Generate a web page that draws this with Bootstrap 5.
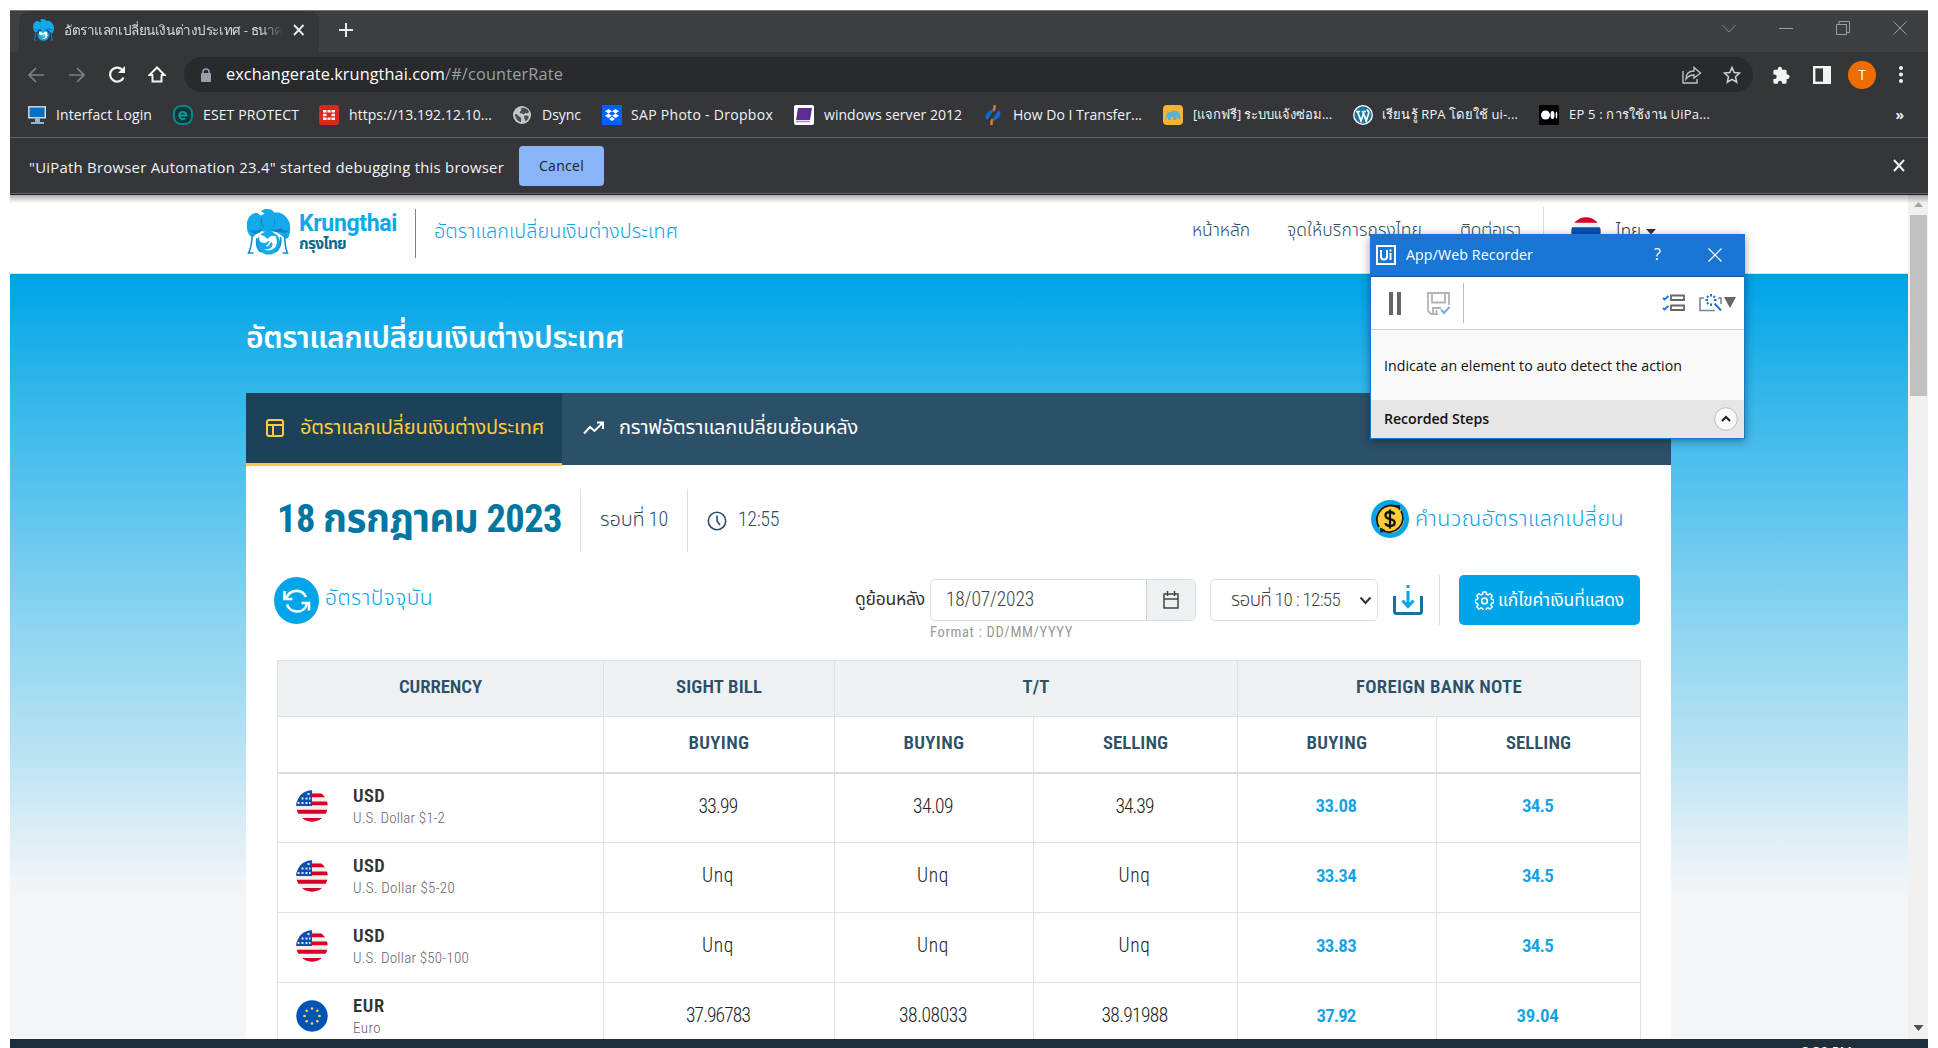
<!DOCTYPE html>
<html lang="th">
<head>
<meta charset="utf-8">
<meta name="viewport" content="width=device-width, initial-scale=1">
<title>อัตราแลกเปลี่ยนเงินต่างประเทศ - ธนาคารกรุงไทย</title>
<link rel="stylesheet" href="https://cdn.jsdelivr.net/npm/bootstrap@5.3.0/dist/css/bootstrap.min.css">
<style>
body{background:#fff;overflow:hidden;height:1048px;width:1938px;font-family:"Roboto Condensed",Roboto,"Noto Sans Thai","Noto Sans",sans-serif;font-stretch:75%;color:#333}
svg{display:block;flex:none}
.t{white-space:pre;display:inline-block;flex:none;line-height:1.2}
.ui{font-family:"Open Sans","Noto Sans",sans-serif;font-stretch:100%}
.screen{margin:10px 0 0 10px;width:1918px;height:1038px;position:relative}
.tabstrip{height:42px;background:#3c4043;border-top:1px solid #777;padding-left:9px}
.btab{width:300px;height:41px;background:#35363a;border-radius:10px 10px 0 0;padding:0 0 3px 14px;color:#d5d8dc;font-size:13.5px}
.btab-title{width:219px;margin-left:10px;overflow:hidden;-webkit-mask-image:linear-gradient(90deg,#000 90%,transparent);mask-image:linear-gradient(90deg,#000 90%,transparent)}
.dark{background:#35363a;color:#f1f3f4}
.tools{height:45px;padding-left:17px}
.omni{width:1569px;height:35px;border-radius:18px;background:#292a2d;margin-left:18px;padding:0 12px 0 17px}
.marks{height:40px;padding:0 24px 4px 18px;font-size:14px}
.infobar{height:56px;border-top:1px solid #63646a;padding:0 23px 0 19px;font-size:14.9px}
.infoline{height:2px;background:#202124;border-top:1px solid #63646a}
.cancel{width:85px;height:40px;background:#8ab4f8;color:#202124;border-radius:4px;margin-left:15px}
.viewport{height:844px;overflow:hidden;position:relative}
.viewport::before{content:"";position:absolute;z-index:3;left:0;right:0;top:0;height:8px;background:linear-gradient(rgba(0,0,0,.32),rgba(0,0,0,0))}
.scroll{width:20px;background:#f1f1f1}
.thumb{width:17px;height:181px;background:#c1c1c1;margin-left:2px}
.site{width:1898px}
.head{height:79px;background:#fff;border-bottom:1px solid #d9e2e8;padding-left:236px}
.hero{height:770px;background:linear-gradient(#009ddf 0,#00a4e8 6px,#03a6e9 14px,#2fb5ea 110px,#59c3ed 220px,#8dd4f1 350px,#bde4f3 490px,#d8ecf5 545px,#f4f6f8 623px);padding-left:236px}
.hero-title{height:119px;color:#fff;font-size:30px;font-weight:600;padding-top:8px}
.tabs{width:1425px;height:72px;background:#2c5067;color:#fff;font-size:20px}
.tabs .t{margin-bottom:2px}
.tab-on{width:316px;height:73px;background:#1c4158;color:#ffcd3c;border-bottom:3px solid #ffcd3c;padding-left:20px}
.sheet{width:1425px;height:600px;background:#fff;padding:24px 31px 0 31px}
.blue{color:#12a2e6;font-weight:300}
.navy{color:#2c5067;font-weight:300}
.vline{width:1px;background:#d7e1e9;flex:none}
.daterow{height:63px}
.daterow .t,.daterow svg{margin-bottom:3px}
.ctl{height:50px;margin-top:23px}
.field{height:42px;border:1px solid #d7e1e9;border-radius:5px;background:#fff;font-size:19.5px;color:#444;font-weight:300}
.addon{width:49px;background:#edf1f4;border-left:1px solid #ced4da;border-radius:0 5px 5px 0}
.edit{width:181px;height:50px;background:#00a4e8;border-radius:5px;color:#fff;font-size:17.5px;margin-left:19px}
.rates{width:1363px;table-layout:fixed;margin:35px 0 0 0;border:1px solid #d7e1e9;color:#333}
.rates th,.rates td{border:1px solid #dae2ea;vertical-align:middle;text-align:center;padding:0;background:#fff}
.rates thead th{height:56px;font-size:18.8px;font-weight:600;color:#2c5067;padding-bottom:3px}
.rates thead tr:first-child th{background:#edf1f4;height:56px}
.rates thead tr:last-child th{border-bottom:2px solid #d7e1e9}
.rates tbody td{height:70px;font-size:19.5px;color:#222;padding:0 2px 3px 0;font-weight:300}
.rates tbody td.fx{color:#12a2e6;font-weight:600;font-size:19px}
.code{font-size:18.5px;font-weight:600;line-height:23px;color:#333;margin-top:2px}
.desc{font-size:15px;line-height:21px;color:#666}
.taskbar{height:9px;background:#1e2f3b;overflow:hidden}
.clock{font-size:13.5px;line-height:12px;color:#fff;padding:6px 76px 0 0}
.rec{position:absolute;left:1360px;top:224px;width:375px;height:205px;border:1px solid #1a76d4;background:#f9f9f9;box-shadow:0 2px 9px rgba(0,0,0,.4);z-index:5;color:#111;font-size:14.2px}
.rec-title{height:42px;background:#1a76d4;color:#fff;border-bottom:1px solid #0f5ba8;padding:0 0 2px 5px}
.rec-tools{height:53px;background:#fff;border-bottom:1px solid #d0d0d0;padding-left:18px}
.rec-body{height:70px;padding:2px 0 0 13px}
.rec-steps{height:38px;background:#e6e6e6;padding:0 6px 0 13px;font-weight:600}
</style>
<script src="https://cdn.jsdelivr.net/npm/bootstrap@5.3.0/dist/js/bootstrap.bundle.min.js"></script>
</head>
<body>
<svg width="0" height="0" class="position-absolute">
<defs>
<clipPath id="round"><circle cx="16" cy="16" r="15.7"/></clipPath>
<symbol id="us" viewBox="0 0 32 32"><g clip-path="url(#round)"><rect width="32" height="32" fill="#f0f0f0"/><path d="M0 3.500h32v3.800H0zM0 11.500h32v3.800H0zM0 19.800h32v4H0zM0 28h32v4H0z" fill="#d80027"/><rect width="16" height="16" fill="#0f4fb0"/><path d="M5.500 7.500h2v2h-2zM9.500 7.500h2v2h-2zM13 7.500h1.500v2H13zM11.500 3h2v2h-2zM5.500 12h2v2h-2zM1.500 12h2v2h-2zM9.500 12h2v2h-2zM13 12h1.500v2H13z" fill="#dfe8fb"/></g></symbol>
<symbol id="eu" viewBox="0 0 32 32"><circle cx="16" cy="16" r="15.700" fill="#0052b4"/><g fill="#ffda44"><circle cx="16" cy="8.500" r="1.300"/><circle cx="21.300" cy="10.700" r="1.300"/><circle cx="23.500" cy="16" r="1.300"/><circle cx="21.300" cy="21.300" r="1.300"/><circle cx="16" cy="23.500" r="1.300"/><circle cx="10.700" cy="21.300" r="1.300"/><circle cx="8.500" cy="16" r="1.300"/><circle cx="10.700" cy="10.700" r="1.300"/></g></symbol>
<symbol id="bird" viewBox="0 0 44 46"><path d="M14.500 2.500C16 .6 18 0 20.500 0 24 0 26.500 1 27.500 3.500L32 3.500c5 1 9 5 11 10 1.500 5 1 11-1.500 15.500-2 1-3.500.5-4.500-1L29 22l-7 1.500L14 22l-7 5.500c-2 .5-4-.5-5-3C-.5 19-.5 12 3 7.500 5 5 8 3.500 11 4l3 2.500 4-1.500c-1-1.500-2-2-3.500-2.500z" fill="#14a9ea"/><path d="M3 21c2 4 7 4.500 11 2l2-3c-4 1-9 2-13 1zM24 20c3 3 7 4 10 3 3 1 6 1 8-1-3 0-6-1-8-3-3 2-6 2-10 1zM16 8c-1 4-1 8 2 11-3-1-6-6-2-11zM27 7c2 4 1 9-2 12 4-2 5-8 2-12z" fill="#0684c8"/><circle cx="22" cy="34" r="11.500" fill="#14a9ea"/><path d="M13 26c4 0 6 2 8 4 2-3 5-4 8-3 2 4 2 9-1 12-3 3-8 3-11 1 4 1 8 0 9-4 0-3-2-4-4-4-2 2-5 3-8 1-1-2-2-4-1-7z" fill="#fff"/><path d="M24 32c-1 2-1 4-4 5" fill="none" stroke="#fff" stroke-width="1.600"/><path d="M6 26c-1 7-1 13-4 18h5M38 27c1 6 0 11 3 17h-5M10.500 29c-1 6 0 11 4 14M34 28c1 6-1 12-5 15" fill="none" stroke="#1191cf" stroke-width="1.600"/></symbol>
</defs></svg>

<div class="screen">
  <div class="tabstrip d-flex align-items-start ui">
    <div class="btab d-flex align-items-center">
      <svg width="21" height="24" viewBox="0 0 44 46"><use href="#bird" width="44" height="46"/></svg>
      <div class="btab-title"><span class="t" data-w="219">อัตราแลกเปลี่ยนเงินต่างประเทศ - ธนาค</span></div>
      <svg width="12" height="12" viewBox="0 0 12 12" style="margin-left:10px"><path d="M1 1l9.500 10M10.500 1L1 11" stroke="#e8eaed" stroke-width="1.900"/></svg>
    </div>
    <svg width="16" height="16" viewBox="0 0 16 16" style="margin:11px 0 0 19px"><path d="M8 1v14M1 8h14" stroke="#e8eaed" stroke-width="2"/></svg>
    <div class="ms-auto d-flex align-items-center" style="height:34px;padding-right:21px;gap:43px">
      <svg width="14" height="9" viewBox="0 0 14 9"><path d="M.5 1L7 8l6.500-7" fill="none" stroke="#83878a"/></svg>
      <svg width="14" height="9" viewBox="0 0 14 9"><path d="M0 4.500h14" stroke="#9a9ea1"/></svg>
      <svg width="14" height="14" viewBox="0 0 14 14"><path d="M.5 3.500h10v10H.5zM3 3.500V.5h10.500v11H11" fill="none" stroke="#9a9ea1"/></svg>
      <svg width="14" height="14" viewBox="0 0 14 14"><path d="M.5.5l13 13M13.500.5l-13 13" stroke="#9a9ea1"/></svg>
    </div>
  </div>
  <div class="tools dark d-flex align-items-center ui">
    <svg width="18" height="16" viewBox="0 0 18 16"><path d="M17 8H2M9 1L2 8l7 7" fill="none" stroke="#7d8084" stroke-width="1.700"/></svg>
    <svg width="18" height="16" viewBox="0 0 18 16" style="margin-left:23px"><path d="M1 8h15M9 1l7 7-7 7" fill="none" stroke="#7d8084" stroke-width="1.700"/></svg>
    <svg width="18" height="17" viewBox="0 0 18 17" style="margin-left:22px"><path d="M15.500 11.500a7 7 0 1 1-1.500-8" fill="none" stroke="#f1f3f4" stroke-width="2.200"/><path d="M17 0v7h-7z" fill="#f1f3f4"/></svg>
    <svg width="18" height="17" viewBox="0 0 18 17" style="margin-left:22px"><path d="M4.500 9v6.500h9V9h3L9 1.500 1.500 9z" fill="none" stroke="#f1f3f4" stroke-width="2"/><path d="M5.500 8h7v2h-7z" fill="#35363a"/></svg>
    <div class="omni d-flex align-items-center">
      <svg width="10" height="14" viewBox="0 0 10 14"><path d="M2 6V4a3 3 0 0 1 6 0v2" fill="none" stroke="#9aa0a6" stroke-width="1.500"/><rect y="5" width="10" height="9" rx="1" fill="#9aa0a6"/></svg>
      <span class="t text-white" style="font-size:16.300px;margin-left:15px" data-w="219">exchangerate.krungthai.com</span><span class="t" style="font-size:16.300px;color:#9aa0a6" data-w="118">/#/counterRate</span>
      <svg width="20" height="18" viewBox="0 0 20 18" class="ms-auto"><path d="M1 5v12h14v-4" fill="none" stroke="#bdc1c6" stroke-width="1.400"/><path d="M4 13c0-6 4-8 8-8V1.500L18.500 7 12 12V9c-4 0-6 1-8 4z" fill="none" stroke="#bdc1c6" stroke-width="1.400"/></svg>
      <svg width="18" height="18" viewBox="0 0 18 18" style="margin-left:21px"><path d="M9 1.500l2.200 5.100 5.300.5-4 3.600 1.200 5.500L9 13.300l-4.700 2.900 1.200-5.500-4-3.600 5.300-.5z" fill="none" stroke="#d0d3d6" stroke-width="1.500"/></svg>
    </div>
    <svg width="19" height="18" viewBox="0 0 20 20" style="margin-left:19px"><path d="M17 9.500h-1.300V6A1.700 1.700 0 0 0 14 4.300h-3.500V3a2.300 2.300 0 1 0-4.600 0v1.300H2.500A1.700 1.700 0 0 0 1 6v3.500h1.200a2.500 2.500 0 0 1 0 5H1V18c0 1 .7 1.700 1.500 1.700H6v-1.300a2.400 2.400 0 0 1 4.700 0v1.300H14c1 0 1.700-.7 1.700-1.700v-3.600H17a2.500 2.500 0 0 0 0-4.900z" fill="#f1f3f4"/></svg>
    <svg width="18" height="18" viewBox="0 0 18 18" style="margin-left:22px"><rect x="1.200" y="1.200" width="15.600" height="15.600" fill="none" stroke="#f1f3f4" stroke-width="2.400"/><path d="M10 1h7v16h-7z" fill="#f1f3f4"/></svg>
    <div class="rounded-circle text-white d-flex align-items-center justify-content-center" style="width:28px;height:28px;background:#ef6c00;margin-left:17px;font-size:14px">T</div>
    <svg width="4" height="17" viewBox="0 0 4 17" style="margin-left:23px" fill="#f1f3f4"><circle cx="2" cy="2" r="2"/><circle cx="2" cy="8.500" r="2"/><circle cx="2" cy="15" r="2"/></svg>
  </div>
  <div class="marks dark d-flex align-items-center ui">
    <svg width="19" height="20" viewBox="0 0 19 20"><rect x=".8" y="1.800" width="16.500" height="11" fill="#0a6fc2" stroke="#cfe3f3" stroke-width="1.400"/><path d="M7 13h5v4H7zM3 17h13v2H3z" fill="#8fb4d4"/></svg>
    <span class="t" style="margin-left:9px" data-w="96">Interfact Login</span>
    <svg width="20" height="20" viewBox="0 0 20 20" style="margin-left:21px"><rect x="1" y="1" width="18" height="18" rx="7" fill="#0b3a3e" stroke="#0f8387" stroke-width="2"/><path d="M6.500 10.500h7a3.600 3.600 0 1 0-1.300 2.800" fill="none" stroke="#12979b" stroke-width="2"/></svg>
    <span class="t" style="margin-left:10px" data-w="96">ESET PROTECT</span>
    <svg width="20" height="20" viewBox="0 0 20 20" style="margin-left:20px"><rect width="20" height="20" rx="3" fill="#da291c"/><path d="M4 5h3.500v2.500H4zM8.500 5h3v2.500h-3zM12.500 5H16v2.500h-3.500zM4 8.700h3.500v2.600H4zM12.500 8.700H16v2.600h-3.500zM4 12.500h3.500V15H4zM8.500 12.500h3V15h-3zM12.500 12.500H16V15h-3.500z" fill="#fff"/></svg>
    <span class="t" style="margin-left:10px" data-w="143">https://13.192.12.10...</span>
    <svg width="18" height="18" viewBox="0 0 18 18" style="margin-left:21px"><circle cx="9" cy="9" r="9" fill="#c4c7c9"/><path d="M2 8c3 0 3 2 5 3s1 3 1 5c-3 0-6-4-6-8zM8 2c4-1 7 1 8 4-1 1-2 2-3 1s-1 2-3 1-4 0-3-2 2-2 1-4zM11 10c3-1 4 0 5 1-1 2-2 4-4 4z" fill="#4a4c50"/></svg>
    <span class="t" style="margin-left:11px" data-w="39">Dsync</span>
    <svg width="20" height="20" viewBox="0 0 20 20" style="margin-left:21px"><path fill="#0061fe" d="M0 0h20v20H0z"/><path d="M6.500 4l3.500 2.200-3.500 2.200L3 6.200zM13.500 4L17 6.200l-3.500 2.200L10 6.200zM6.500 8.500l3.500 2.200-3.500 2.200L3 10.700zM13.500 8.500l3.500 2.200-3.500 2.200-3.500-2.200zM10 12l3 2-3 2-3-2z" fill="#fff"/></svg>
    <span class="t" style="margin-left:9px" data-w="142">SAP Photo - Dropbox</span>
    <svg width="20" height="20" viewBox="0 0 20 20" style="margin-left:21px"><rect width="20" height="20" rx="2" fill="#fff"/><path d="M4 3h14l-2 12H2z" fill="#5c2d91"/><path d="M2 16.500h14" stroke="#a58bc4" stroke-width="1.500"/></svg>
    <span class="t" style="margin-left:10px" data-w="138">windows server 2012</span>
    <svg width="16" height="20" viewBox="0 0 16 20" style="margin-left:23px"><path d="M9.500 0v3.500L8 6M6.500 20v-3.500L8 14" stroke="#e87a1d" stroke-width="2.500" fill="none"/><path d="M8.500 4C3 6-.5 9 1 14.500c2 0 3-1 3.500-3 .5-2 3.500-3 4-7.500zM7.500 16c5.500-2 9-5 7.500-10.500-2 0-3 1-3.500 3-.5 2-3.500 3-4 7.500z" fill="#0b6cd0"/></svg>
    <span class="t" style="margin-left:12px" data-w="129">How Do I Transfer...</span>
    <svg width="20" height="20" viewBox="0 0 20 20" style="margin-left:21px"><rect width="20" height="20" rx="4" fill="#f9b233"/><path d="M3 13c0-5 2-6 5-6 1-2 6-2 8 1 1 2 2 4 1 6h-2l-1-3-1 4h-3v-3H8v3H5v-4l-1 3z" fill="#5fb0cf"/></svg>
    <span class="t" style="margin-left:10px;font-size:13px" data-w="139">[แจกฟรี] ระบบแจ้งซ่อม...</span>
    <svg width="20" height="20" viewBox="0 0 20 20" style="margin-left:21px"><circle cx="10" cy="10" r="9.300" fill="#21759b" stroke="#fff" stroke-width="1.300"/><path d="M3 6.500h4M4.500 6.500L8 16l2.500-7.500M8.500 6.500h4.500M10 6.500L13.200 16l2.600-8c.3-2-1.500-2-1.800-3.500" fill="none" stroke="#fff" stroke-width="1.700"/></svg>
    <span class="t" style="margin-left:9px;font-size:13px" data-w="136">เรียนรู้ RPA โดยใช้ ui-...</span>
    <svg width="20" height="20" viewBox="0 0 20 20" style="margin-left:21px"><rect width="20" height="20" rx="1.500"/><circle cx="6.500" cy="10" r="4.500" fill="#fff"/><ellipse cx="13.500" cy="10" rx="2" ry="4" fill="#fff"/><ellipse cx="17.500" cy="10" rx=".8" ry="3.500" fill="#fff"/></svg>
    <span class="t" style="margin-left:10px;font-size:13px" data-w="141">EP 5 : การใช้งาน UiPa...</span>
    <span class="t ms-auto fw-bold">»</span>
  </div>
  <div class="infobar dark d-flex align-items-center ui">
    <span class="t mt-1" data-w="475">"UiPath Browser Automation 23.4" started debugging this browser</span>
    <div class="cancel d-flex align-items-center justify-content-center"><span class="t" style="font-size:14px;margin-top:1px" data-w="45">Cancel</span></div>
    <svg width="12" height="13" viewBox="0 0 12 13" class="ms-auto"><path d="M1 1l10 11M11 1L1 12" stroke="#f1f3f4" stroke-width="2"/></svg>
  </div>
  <div class="infoline"></div>

  <div class="viewport d-flex">
    <div class="site">
      <header class="head d-flex align-items-start">
        <svg width="45" height="46" viewBox="0 0 44 46" style="margin-top:14px"><use href="#bird" width="44" height="46"/></svg>
        <div class="d-flex flex-column" style="margin:15px 0 0 8px">
          <span class="t fw-bold" style="font-family:Roboto,sans-serif;font-size:23px;font-stretch:100%;line-height:27px;color:#09a9ea" data-w="98">Krungthai</span>
          <span class="t fw-bold" style="font-size:15.500px;line-height:17px;margin-top:-1px;color:#0a6a8c" data-w="47">กรุงไทย</span>
        </div>
        <div style="width:1px;height:49px;background:#12a2e6;margin:14px 0 0 18px"></div>
        <span class="t blue" style="font-size:19.800px;margin:25px 0 0 18px" data-w="244">อัตราแลกเปลี่ยนเงินต่างประเทศ</span>
        <nav class="d-flex navy" style="font-size:17.500px;margin:25px 0 0 514px">
          <span class="t" data-w="58">หน้าหลัก</span>
          <span class="t" style="margin-left:37px" data-w="135">จุดให้บริการกรุงไทย</span>
          <span class="t" style="margin-left:38px" data-w="61">ติดต่อเรา</span>
        </nav>
        <div class="vline" style="height:58px;margin:12px 0 0 22px"></div>
        <svg width="30" height="30" viewBox="0 0 32 32" style="margin:22px 0 0 27px"><g clip-path="url(#round)"><path fill="#f0f0f0" d="M0 0h32v32H0z"/><path fill="#d80027" d="M0 0h32v6H0zM0 26h32v6H0z"/><path fill="#0052b4" d="M0 11h32v10H0z"/></g></svg>
        <span class="t" style="font-size:17px;font-weight:300;margin:26px 0 0 15px" data-w="25">ไทย</span>
        <svg width="10" height="6" viewBox="0 0 10 6" style="margin:34px 0 0 5px"><path d="M0 0h10L5 5.500z" fill="#333"/></svg>
      </header>
      <div class="hero">
        <div class="hero-title d-flex align-items-center"><span class="t" data-w="378">อัตราแลกเปลี่ยนเงินต่างประเทศ</span></div>
        <div class="tabs d-flex align-items-start">
          <div class="tab-on d-flex align-items-center">
            <svg width="18" height="18" viewBox="0 0 18 18"><rect x="1" y="1" width="16" height="16" rx="2" fill="none" stroke="#ffcd3c" stroke-width="2"/><path d="M1 6h16M7 6v11" stroke="#ffcd3c" stroke-width="2"/></svg>
            <span class="t" style="margin-left:16px" data-w="244">อัตราแลกเปลี่ยนเงินต่างประเทศ</span>
          </div>
          <div class="d-flex align-items-center" style="height:70px;padding-left:21px">
            <svg width="21" height="14" viewBox="0 0 21 14"><path d="M1 12.500l6-6.500 4.500 4L19.500 2M14 1.500h6V8" fill="none" stroke="#fff" stroke-width="2"/></svg>
            <span class="t" style="margin-left:15px" data-w="239">กราฟอัตราแลกเปลี่ยนย้อนหลัง</span>
          </div>
        </div>
        <main class="sheet">
          <div class="daterow d-flex align-items-center">
            <span class="t fw-bold" style="font-size:38.500px;color:#0076a0;line-height:60px" data-w="285">18 กรกฎาคม 2023</span>
            <div class="vline h-100" style="margin-left:18px"></div>
            <span class="t navy" style="font-size:20px;margin-left:19px" data-w="68">รอบที่ 10</span>
            <div class="vline h-100" style="margin-left:19px"></div>
            <svg width="20" height="20" viewBox="0 0 20 20" style="margin:0 0 0 19px"><circle cx="10" cy="10" r="8.700" fill="none" stroke="#2c5067" stroke-width="1.600"/><path d="M10 4.500V10l3 4" fill="none" stroke="#2c5067" stroke-width="1.600"/></svg>
            <span class="t navy" style="font-size:20px;margin-left:11px" data-w="41">12:55</span>
            <svg width="38" height="38" viewBox="0 0 38 38" class="ms-auto"><circle cx="19" cy="19" r="19" fill="#00a4e8"/><circle cx="19" cy="19" r="14" fill="#ffcd3c"/><path d="M8 27A14 14 0 0 1 27 7.500M30 11a14 14 0 0 1-18.500 19.500" fill="none" stroke="#1a1a1a" stroke-width="1.800"/><path d="M23.500 5h5.500v5.500zM9 27.500l.5 5.500 5-3z" fill="#1a1a1a"/><path d="M23.500 14.500c-1-1.800-2.600-2.500-4.500-2.500-2.500 0-4.500 1.200-4.500 3.500 0 5 9.200 2.200 9.200 7 0 2.300-2.200 3.500-4.700 3.500-2.200 0-4-1-4.800-2.800M19 9.500v19" fill="none" stroke="#111" stroke-width="2.300"/></svg>
            <span class="t blue" style="font-size:21.500px;margin-left:6px;margin-right:16px" data-w="209">คำนวณอัตราแลกเปลี่ยน</span>
          </div>
          <div class="ctl d-flex align-items-start">
            <svg width="45" height="47" viewBox="0 0 45 47" style="margin:2px 0 0 -3px"><ellipse cx="22.500" cy="23.500" rx="22.500" ry="23.500" fill="#00a4e8"/><path d="M12.500 21A10.500 10.500 0 0 1 32 20M33 27a10.500 10.500 0 0 1-20 .5" fill="none" stroke="#fff" stroke-width="2.600"/><path d="M10.500 14v8h8M35 33.500V26h-7.500" fill="none" stroke="#fff" stroke-width="2.600"/></svg>
            <span class="t blue" style="font-size:21px;margin:11px 0 0 6px" data-w="108">อัตราปัจจุบัน</span>
            <span class="t ms-auto" style="font-size:17.500px;margin-top:14px" data-w="70">ดูย้อนหลัง</span>
            <div style="margin:4px 0 0 5px">
              <div class="field d-flex align-items-center" style="width:266px;padding-left:15px">
                <span class="t" data-w="88">18/07/2023</span>
                <div class="addon h-100 ms-auto d-flex align-items-center justify-content-center"><svg width="16" height="18" viewBox="0 0 16 18"><path d="M1 3h14v14H1zM1 8h14M4.500 0v5M11.500 0v5" fill="none" stroke="#444" stroke-width="1.500"/></svg></div>
              </div>
              <span class="t d-block" style="font-size:14.500px;color:#999;margin-top:3px"><span class="t" data-w="143">Format : DD/MM/YYYY</span></span>
            </div>
            <div class="field d-flex align-items-center" style="width:168px;margin:4px 0 0 14px;padding-left:20px">
              <span class="t" style="font-size:19px" data-w="109">รอบที่ 10 : 12:55</span>
              <svg width="13" height="9" viewBox="0 0 13 9" style="margin-left:19px"><path d="M1.500 1.500l5 5.500 5-5.500" fill="none" stroke="#333" stroke-width="2"/></svg>
            </div>
            <svg width="30" height="31" viewBox="0 0 30 31" style="margin:10px 0 0 15px"><path d="M1.500 11v15.500a2 2 0 0 0 2 2h23a2 2 0 0 0 2-2V11" fill="none" stroke="#1672a5" stroke-width="3"/><path d="M15 6v15M9.500 15.500l5.500 6 5.500-6M15 0v3" fill="none" stroke="#00a4e8" stroke-width="3"/></svg>
            <div class="vline h-100" style="margin-left:16px"></div>
            <div class="edit d-flex align-items-center justify-content-center">
              <svg width="19" height="19" viewBox="0 0 20 20"><path d="M8.500 1h3l.6 2.400 1.700.7 2.100-1.300 2.200 2.200-1.300 2.100.7 1.700 2.400.6v3l-2.400.6-.7 1.700 1.300 2.100-2.200 2.200-2.100-1.300-1.700.7-.6 2.400h-3l-.6-2.400-1.700-.7L4.100 19l-2.200-2.200 1.300-2.100-.7-1.700L.1 12.400v-3l2.400-.6.7-1.700L1.900 5l2.200-2.200 2.100 1.300 1.700-.7z" fill="none" stroke="#fff" stroke-width="1.600"/><circle cx="10" cy="10.500" r="3" fill="none" stroke="#fff" stroke-width="1.600"/></svg>
              <span class="t" style="margin-left:4px" data-w="126">แก้ไขค่าเงินที่แสดง</span>
            </div>
          </div>
          <table class="table rates">
            <colgroup><col style="width:326px"><col style="width:231px"><col style="width:199px"><col style="width:204px"><col style="width:199px"><col style="width:204px"></colgroup>
            <thead>
              <tr><th><span class="t" data-w="83">CURRENCY</span></th><th><span class="t" data-w="86">SIGHT BILL</span></th><th colspan="2"><span class="t" data-w="27">T/T</span></th><th colspan="2"><span class="t" data-w="166">FOREIGN BANK NOTE</span></th></tr>
              <tr><th></th><th><span class="t" data-w="61">BUYING</span></th><th><span class="t" data-w="61">BUYING</span></th><th><span class="t" data-w="65">SELLING</span></th><th><span class="t" data-w="61">BUYING</span></th><th><span class="t" data-w="65">SELLING</span></th></tr>
            </thead>
            <tbody id="rows"></tbody>
          </table>
        </main>
      </div>
    </div>
    <div class="scroll d-flex flex-column">
      <svg width="20" height="20" viewBox="0 0 20 20"><path d="M6 12l4.500-5 4.500 5z" fill="#a3a3a3"/></svg>
      <div class="thumb"></div>
      <svg width="20" height="20" viewBox="0 0 20 20" class="mt-auto"><path d="M5.500 6h10l-5 6z" fill="#505050"/></svg>
    </div>
  </div>
  <div class="taskbar ui d-flex justify-content-end"><div class="clock">2:39 PM</div></div>

  <div class="rec ui">
    <div class="rec-title d-flex align-items-center">
      <svg width="20" height="20" viewBox="0 0 20 20"><rect x="1" y="1" width="18" height="18" fill="none" stroke="#fff" stroke-width="2"/><path d="M5 5v6.500a3 3 0 0 0 6 0V5M14.500 8v7M14.500 4.500v2" fill="none" stroke="#fff" stroke-width="2"/></svg>
      <span class="t" style="margin-left:10px" data-w="127">App/Web Recorder</span>
      <span class="t" style="font-size:16px;margin-left:121px">?</span>
      <svg width="14" height="14" viewBox="0 0 14 14" style="margin-left:47px"><path d="M.5.5l13 13M13.500.5l-13 13" stroke="#fff" stroke-width="1.200"/></svg>
    </div>
    <div class="rec-tools d-flex align-items-center">
      <svg width="12" height="23" viewBox="0 0 12 23"><path d="M0 0h4v23H0zM8 0h4v23H8z" fill="#666"/></svg>
      <svg width="23" height="23" viewBox="0 0 23 23" style="margin-left:26px"><path d="M22 13V1H1v18l3 3h7M5 1v9.500h13V1M6 22v-6h8M9.500 18v4" fill="none" stroke="#b4b4b4" stroke-width="1.800"/><path d="M14 17.500l3 3.500 5.500-6" fill="none" stroke="#79acf0" stroke-width="2"/></svg>
      <div style="width:1px;height:40px;background:#bbb;margin-left:13px"></div>
      <svg width="24" height="18" viewBox="0 0 24 18" style="margin-left:198px"><path d="M9 1.500h13v4.500H9zM9 11.500h13V16H9z" fill="none" stroke="#666" stroke-width="1.800"/><path d="M1 4l1.500 1.500L6.500 2M1 14l1.500 1.500 4-3.500" fill="none" stroke="#1a76d4" stroke-width="1.800"/></svg>
      <svg width="24" height="18" viewBox="0 0 24 18" style="margin-left:13px"><path d="M5 4H1v12.500h15M19 4h3v6" fill="none" stroke="#7b8794" stroke-width="1.600"/><path d="M15.500 9.500l6.500 7" stroke="#1a76d4" stroke-width="2"/><path d="M12 0v2.500M12 9.500V12M6.500 6H9M15 6h2.500M8 2l1.500 1.500M16 2l-1.500 1.500M8 10l1.500-1.500" stroke="#1a76d4" stroke-width="2"/></svg>
      <svg width="12" height="12" viewBox="0 0 12 12" style="margin-left:1px"><path d="M0 0h12L6 11z" fill="#666"/></svg>
    </div>
    <div class="rec-body d-flex align-items-center"><span class="t" data-w="298">Indicate an element to auto detect the action</span></div>
    <div class="rec-steps d-flex align-items-center">
      <span class="t" data-w="105">Recorded Steps</span>
      <svg width="24" height="24" viewBox="0 0 24 24" class="ms-auto"><circle cx="12" cy="12" r="11.300" fill="#fafafa" stroke="#bbb"/><path d="M8 14l4-4 4 4" fill="none" stroke="#222" stroke-width="2.200"/></svg>
    </div>
  </div>
</div>
<script>
// Exchange rates: flag, code, description, description width, then rate and drawn width pairs
const rates = [
  ['us','USD','U.S. Dollar $1-2',92,'33.99',39,'34.09',40,'34.39',38,'33.08',41,'34.5',31],
  ['us','USD','U.S. Dollar $5-20',102,'Unq',32,'Unq',32,'Unq',32,'33.34',40,'34.5',31],
  ['us','USD','U.S. Dollar $50-100',116,'Unq',32,'Unq',32,'Unq',32,'33.83',40,'34.5',31],
  ['eu','EUR','Euro',28,'37.96783',64,'38.08033',68,'38.91988',66,'37.92',39,'39.04',42]
];
document.getElementById('rows').innerHTML = rates.map(r => {
  let cells = '';
  for (let i = 4; i < 14; i += 2) cells += `<td class="${i > 9 ? 'fx' : ''}"><span class="t" data-w="${r[i+1]}">${r[i]}</span></td>`;
  return `<tr><td class="text-start"><div class="d-flex align-items-center" style="padding-left:18px"><svg width="32" height="32"><use href="#${r[0]}"/></svg><div class="d-flex flex-column" style="margin-left:25px"><span class="t code" data-w="32">${r[1]}</span><span class="t desc" data-w="${r[3]}">${r[2]}</span></div></div></td>${cells}</tr>`;
}).join('');
// Track each label so that it takes its intended width
document.querySelectorAll('[data-w]').forEach(e => {
  e.style.alignSelf = e.parentElement.classList.contains('flex-column') ? 'flex-start' : '';
  const w0 = e.getBoundingClientRect().width;
  e.style.letterSpacing = '1px';
  const d = e.getBoundingClientRect().width - w0;
  e.style.letterSpacing = ((e.dataset.w - w0) / d).toFixed(3) + 'px';
});
</script>
</body>
</html>
